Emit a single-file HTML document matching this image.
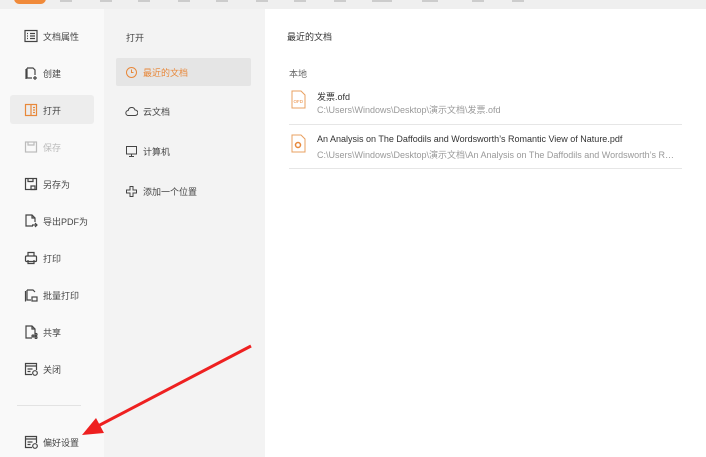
<!DOCTYPE html>
<html><head><meta charset="utf-8"><style>
*{margin:0;padding:0;box-sizing:border-box}
body{width:706px;height:457px;overflow:hidden;position:relative;font-family:"Liberation Sans","Noto Sans CJK SC",sans-serif;font-size:9px;color:#333;background:#fff}
.top{position:absolute;left:0;top:0;width:706px;height:9px;background:#efefef;overflow:hidden}
.tab{position:absolute;left:14px;top:-7px;width:32px;height:11px;border-radius:6px;background:#f08a3a}
.tt{position:absolute;top:0;height:2px;width:12px;background:#ccc}
.left{position:absolute;left:0;top:9px;width:104px;height:448px;background:#f9f9f9}
.mid{position:absolute;left:104px;top:9px;width:161px;height:448px;background:#f3f3f3}
.it{position:absolute;left:24px;display:flex;align-items:center;gap:5px;color:#444}
.it svg{width:14px;height:14px}
.sel{position:absolute;left:10px;top:95px;width:84px;height:29px;background:#ededed;border-radius:3px}
.m{position:absolute;left:125px;display:flex;align-items:center;gap:5px;color:#444}
.m svg{width:13px;height:13px}
.msel{position:absolute;left:116px;top:58px;width:135px;height:28px;background:#e5e5e5;border-radius:2px}
.r{position:absolute;left:290px;white-space:nowrap}
.g{color:#999}
.hr{position:absolute;left:289px;width:393px;height:1px;background:#e6e6e6}
</style></head><body>
<div class="top"><div class="tab"></div>
<div class="tt" style="left:60px"></div><div class="tt" style="left:100px"></div><div class="tt" style="left:138px"></div><div class="tt" style="left:178px"></div><div class="tt" style="left:216px"></div><div class="tt" style="left:256px"></div><div class="tt" style="left:294px"></div><div class="tt" style="left:334px"></div><div class="tt" style="left:372px;width:20px"></div><div class="tt" style="left:422px;width:16px"></div><div class="tt" style="left:472px"></div><div class="tt" style="left:512px"></div>
</div>
<div class="left"></div><div class="mid"></div>
<div class="sel"></div>
<div class="it" style="top:29px"><svg viewBox="0 0 14 14" fill="none" stroke="#444" stroke-width="1.2"><rect x="1" y="1.5" width="12" height="11"/><path d="M3 4.5h1M6 4.5h5M3 7h1M6 7h5M3 9.5h1M6 9.5h5"/></svg>文档属性</div>
<div class="it" style="top:66px"><svg viewBox="0 0 14 14" fill="none" stroke="#444" stroke-width="1.2"><path d="M3 2h6l2 2v5M3 2v10h5M2 3v10"/><path d="M11 10v4M9 12h4"/></svg>创建</div>
<div class="it" style="top:103px"><svg viewBox="0 0 14 14" fill="none" stroke="#e8883a" stroke-width="1.2"><rect x="1.5" y="1.5" width="11" height="11"/><path d="M7 1.5v11M9 4.5h2M9 7h2M9 9.5h2"/></svg>打开</div>
<div class="it" style="top:140px;color:#bbb"><svg viewBox="0 0 14 14" fill="none" stroke="#bbb" stroke-width="1.2"><rect x="1.5" y="2" width="11" height="10"/><path d="M4 2v3h6V2"/></svg>保存</div>
<div class="it" style="top:177px"><svg viewBox="0 0 14 14" fill="none" stroke="#444" stroke-width="1.2"><rect x="1.5" y="1.5" width="11" height="11"/><path d="M4 1.5v3h5v-3M7 9h4v3.5H7z"/></svg>另存为</div>
<div class="it" style="top:214px"><svg viewBox="0 0 14 14" fill="none" stroke="#444" stroke-width="1.2"><path d="M9 12H2V1h6l3 3v4M8 1v3h3M8 11h5M11 9l2 2-2 2"/></svg>导出PDF为</div>
<div class="it" style="top:251px"><svg viewBox="0 0 14 14" fill="none" stroke="#444" stroke-width="1.2"><rect x="1.5" y="5" width="11" height="5.5" rx="1"/><path d="M4 5V1.5h6V5M4 9v3.5h6V9"/></svg>打印</div>
<div class="it" style="top:288px"><svg viewBox="0 0 14 14" fill="none" stroke="#444" stroke-width="1.2"><path d="M3 2h6l2 2M3 2v10h4M1.5 3v10.5"/><rect x="8" y="9" width="5" height="4"/></svg>批量打印</div>
<div class="it" style="top:325px"><svg viewBox="0 0 14 14" fill="none" stroke="#444" stroke-width="1.2"><path d="M8 13H2V1h6l3 3v5M8 1v3h3"/><circle cx="9" cy="11" r="1"/><circle cx="12" cy="9.5" r="1"/><circle cx="12" cy="12.5" r="1"/></svg>共享</div>
<div class="it" style="top:362px"><svg viewBox="0 0 14 14" fill="none" stroke="#444" stroke-width="1.2"><path d="M8 12.5H1.5v-11h11V8M1.5 4h11M3.5 7h5M3.5 9.5h3"/><circle cx="11" cy="11" r="2.3"/></svg>关闭</div>
<div style="position:absolute;left:17px;top:405px;width:64px;height:1px;background:#e3e3e3"></div>
<div class="it" style="top:435px"><svg viewBox="0 0 14 14" fill="none" stroke="#444" stroke-width="1.2"><path d="M8 12.5H1.5v-11h11V8M1.5 4h11M3.5 7h5M3.5 9.5h3"/><circle cx="11" cy="11" r="2.3"/></svg>偏好设置</div>

<div style="position:absolute;left:126px;top:31px;color:#444">打开</div>
<div class="msel"></div>
<div class="m" style="top:66px;color:#e8883a"><svg viewBox="0 0 13 13" fill="none" stroke="#e8883a"><circle cx="6.5" cy="6.5" r="5"/><path d="M6.5 3.5v3h2"/></svg>最近的文档</div>
<div class="m" style="top:105px"><svg viewBox="0 0 13 13" fill="none" stroke="#444"><path d="M3.5 10.5a2.5 2.5 0 0 1-.3-5A3.5 3.5 0 0 1 10 5a2.7 2.7 0 0 1 .2 5.5z"/></svg>云文档</div>
<div class="m" style="top:145px"><svg viewBox="0 0 13 13" fill="none" stroke="#444"><rect x="1.5" y="1.5" width="10" height="7.5"/><path d="M4 11.5h5M6.5 9v2.5"/></svg>计算机</div>
<div class="m" style="top:185px"><svg viewBox="0 0 13 13" fill="none" stroke="#444"><path d="M5 1.5h3v3.5h3.5v3H8v3.5H5V8H1.5V5H5z"/></svg>添加一个位置</div>

<div class="r" style="top:30px;left:287px">最近的文档</div>
<div class="r g" style="top:67px;left:289px;color:#666">本地</div>
<svg style="position:absolute;left:291px;top:90px" width="15" height="19" viewBox="0 0 15 19" fill="#fff" stroke="#e8a060"><path d="M1 1h9l4 4v13H1z"/><text x="2.5" y="13" font-size="4.5" fill="#e8883a" stroke="none" font-family="Liberation Sans">OFD</text></svg>
<div class="r" style="top:90px;left:317px">发票.ofd</div>
<div class="r g" style="top:103px;left:317px">C:\Users\Windows\Desktop\演示文档\发票.ofd</div>
<div class="hr" style="top:124px"></div>
<svg style="position:absolute;left:291px;top:134px" width="15" height="19" viewBox="0 0 15 19" fill="#fff" stroke="#e8a060"><path d="M1 1h9l4 4v13H1z"/><circle cx="7" cy="11" r="2.5" stroke="#e8883a" stroke-width="1.5"/></svg>
<div class="r" style="top:134px;left:317px">An Analysis on The Daffodils and Wordsworth’s Romantic View of Nature.pdf</div>
<div class="r g" style="top:148px;left:317px;width:357px;overflow:hidden;text-overflow:ellipsis">C:\Users\Windows\Desktop\演示文档\An Analysis on The Daffodils and Wordsworth’s Romantic View of Nature.pdf</div>
<div class="hr" style="top:168px"></div>

<svg style="position:absolute;left:0;top:0" width="706" height="457"><line x1="251" y1="346" x2="96" y2="427" stroke="#ee2020" stroke-width="3"/><polygon points="82,435 96,418 104,433" fill="#ee2020"/></svg>
</body></html>
